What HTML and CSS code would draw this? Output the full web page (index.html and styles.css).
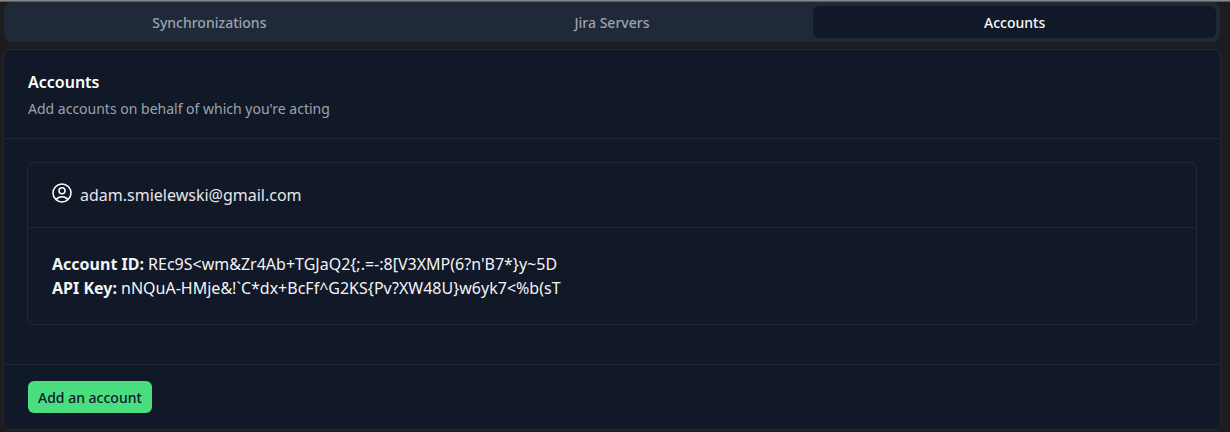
FILE: index.html
```html
<!DOCTYPE html>
<html lang="en">
<head>
<meta charset="utf-8">
<title>Accounts</title>
<link rel="stylesheet" href="styles.css">
</head>
<body>
<div class="topline"></div>
<main class="page">
  <nav class="tabs">
    <button class="tab">Synchronizations</button>
    <button class="tab">Jira Servers</button>
    <button class="tab active">Accounts</button>
  </nav>
  <section class="card">
    <header class="card-head">
      <h1>Accounts</h1>
      <p>Add accounts on behalf of which you're acting</p>
    </header>
    <div class="card-body">
      <article class="account">
        <div class="account-head">
          <svg class="icon" viewBox="0 0 24 24" fill="none" stroke="currentColor" stroke-width="1.5" stroke-linecap="round" stroke-linejoin="round"><path d="M17.982 18.725A7.488 7.488 0 0 0 12 15.75a7.488 7.488 0 0 0-5.982 2.975m11.963 0a9 9 0 1 0-11.963 0m11.963 0A8.966 8.966 0 0 1 12 21a8.966 8.966 0 0 1-5.982-2.275M15 9.75a3 3 0 1 1-6 0 3 3 0 0 1 6 0Z"/></svg>
          <span>adam.smielewski@gmail.com</span>
        </div>
        <div class="account-body">
          <div><strong>Account ID:</strong> REc9S&lt;wm&amp;Zr4Ab+TGJaQ2{;.=-:8[V3XMP(6?n'B7*}y~5D</div>
          <div><strong>API Key:</strong> nNQuA-HMje&amp;!`C*dx+BcFf^G2KS{Pv?XW48U}w6yk7&lt;%b(sT</div>
        </div>
      </article>
    </div>
    <footer class="card-foot">
      <button class="primary">Add an account</button>
    </footer>
  </section>
</main>
</body>
</html>
```
FILE: styles.css
```css
* { box-sizing: border-box; }
html, body { margin: 0; height: 100%; }
body {
  background: #1d1d20;
  color: #f3f4f6;
  font-family: "Noto Sans", sans-serif;
  font-size: 16px;
  overflow: hidden;
}
.topline { height: 2px; background: linear-gradient(#9a9a9a, #4a4a4c); }
.page { padding: 0 9px 0 3px; display: flex; flex-direction: column; gap: 7px; }
.tabs {
  margin: 0 1px;
  height: 40px;
  padding: 4px;
  display: grid;
  grid-template-columns: repeat(3, 1fr);
  background: #1f2937;
  border-radius: 8px;
}
.tab {
  border: 0;
  background: transparent;
  color: #9ca3af;
  font: 500 14px/20px "Noto Sans", sans-serif;
  border-radius: 6px;
  padding: 2px 0 0;
}
.tab.active { background: #111827; color: #f9fafb; }
.card {
  height: 381px;
  background: #111827;
  border: 1px solid #1f2937;
  border-radius: 8px;
  display: flex;
  flex-direction: column;
}
.card-head {
  padding: 20px 24px 18px;
  border-bottom: 1px solid #1f2937;
  height: 89px;
}
h1 { margin: 0; font-size: 16px; line-height: 24px; font-weight: 600; color: #fff; }
.card-head p { margin: 5px 0 0; font-size: 14px; line-height: 20px; color: #9ca3af; }
.card-body { padding: 23px 23px 0; height: 226px; border-bottom: 1px solid #1f2937; }
.account { border: 1px solid #1f2937; border-radius: 8px; height: 163px; }
.account-head {
  height: 65px;
  padding: 0 22px;
  display: flex;
  align-items: center;
  gap: 6px;
  border-bottom: 1px solid #1f2937;
  font-size: 16px;
  color: #e5e7eb;
}
.icon { width: 24px; height: 24px; color: #fff; margin-top: -5px; }
.account-body { padding: 24px; font-size: 16px; line-height: 24px; color: #f3f4f6; }
.account-body strong { font-weight: 700; }
.card-foot { padding: 16px 24px; }
.primary {
  height: 32px;
  padding: 2px 10px 0;
  border: 0;
  border-radius: 6px;
  background: #4ade80;
  color: #111827;
  font: 500 14px/20px "Noto Sans", sans-serif;
}
```
